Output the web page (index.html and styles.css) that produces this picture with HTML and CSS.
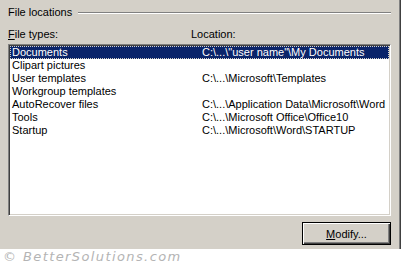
FILE: index.html
```html
<!DOCTYPE html>
<html lang="en">
<head>
    <meta charset="UTF-8">
    <title>File locations</title>
    <link rel="stylesheet" href="styles.css">
</head>
<body>
    <div class="dialog">
        <div class="group-title">
            <span>File locations</span>
            <div class="group-line"></div>
        </div>
        <div class="list-header">
            <span><u>F</u>ile types:</span>
            <span>Location:</span>
        </div>
        <div class="listbox">
            <div class="list-row selected"><span>Documents</span><span>C:\...\"user name"\My Documents</span></div>
            <div class="list-row"><span>Clipart pictures</span><span></span></div>
            <div class="list-row"><span>User templates</span><span>C:\...\Microsoft\Templates</span></div>
            <div class="list-row"><span>Workgroup templates</span><span></span></div>
            <div class="list-row"><span>AutoRecover files</span><span>C:\...\Application Data\Microsoft\Word</span></div>
            <div class="list-row"><span>Tools</span><span>C:\...\Microsoft Office\Office10</span></div>
            <div class="list-row"><span>Startup</span><span>C:\...\Microsoft\Word\STARTUP</span></div>
        </div>
        <div class="btn-row">
            <button class="win-btn"><u>M</u>odify...</button>
        </div>
    </div>
    <div class="watermark">© BetterSolutions.com</div>
</body>
</html>
```

FILE: styles.css
```css
body {
    margin: 0;
    background: #fff;
    font-family: "Liberation Sans", Arial, sans-serif;
    font-size: 11px;
    color: #000;
}
.dialog {
    box-sizing: border-box;
    width: 401px;
    height: 249px;
    background: #d4d0c8;
    border-right: 1px solid #404040;
    box-shadow: inset -1px 0 #808080;
    padding: 6px 9px 0 8px;
}
.group-title {
    display: flex;
    align-items: flex-start;
    gap: 6px;
    line-height: 13px;
}
.group-line {
    flex: 1;
    margin-top: 6px;
    border-top: 1px solid #808080;
    border-bottom: 1px solid #fff;
}
.list-header {
    display: grid;
    grid-template-columns: 183px 1fr;
    margin-top: 9px;
    line-height: 13px;
}
.listbox {
    box-sizing: border-box;
    height: 172px;
    margin-top: 3px;
    background: #fff;
    border: 1px solid;
    border-color: #808080 #fff #fff #808080;
    box-shadow: inset 1px 1px #404040, inset -1px -1px #d4d0c8;
    padding: 1px;
}
.list-row {
    display: grid;
    grid-template-columns: 190px 1fr;
    padding-left: 2px;
    height: 13px;
    line-height: 13px;
    white-space: nowrap;
}
.list-row.selected {
    background: #0a246a;
    color: #fff;
    outline: 1px dotted #d4d0c8;
    outline-offset: -1px;
}
.btn-row {
    display: flex;
    justify-content: flex-end;
    margin-top: 6px;
}
.win-btn {
    width: 89px;
    height: 23px;
    padding: 0;
    background: #d4d0c8;
    border: 1px solid #000;
    box-shadow: inset 1px 1px #fff, inset -1px -1px #404040, inset -2px -2px #808080;
    font-family: "Liberation Sans", Arial, sans-serif;
    font-size: 11px;
    color: #000;
}
.watermark {
    height: 16px;
    padding-left: 3px;
    font-family: "DejaVu Sans", sans-serif;
    font-style: oblique;
    font-size: 13px;
    line-height: 16px;
    letter-spacing: 1.4px;
    color: #b4b4b4;
}
```
